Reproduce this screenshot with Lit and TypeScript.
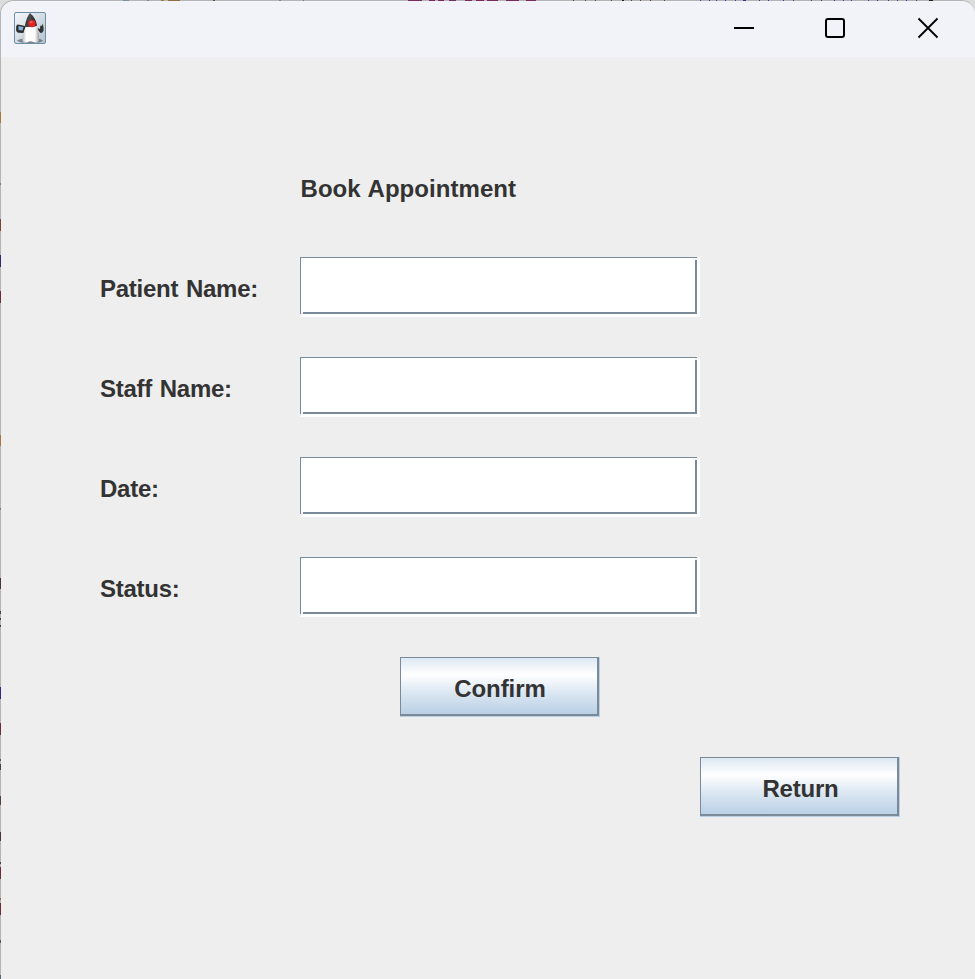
import { LitElement, html, css, svg } from "lit";
import { customElement } from "lit/decorators.js";

type Speck = [start: number, length: number, colour: string];

// Slivers of the editor that lies behind the window, along its top edge.
const navy = [700, 709, 716, 725, 735, 759, 768, 783, 793, 811, 821, 834, 843, 851, 868, 877, 888, 897, 906, 916];
const amber = [573, 585, 595, 611, 631, 640, 650, 664];
const topSpecks: Speck[] = [
  [123, 6, "#78909c"], [147, 2, "#7c8790"], [161, 3, "#a07a45"], [168, 12, "#8f6d3d"],
  [213, 2, "#555"], [279, 2, "#777d9a"], [303, 1, "#777"],
  [408, 14, "#7a2a60"], [429, 6, "#7a2a60"], [438, 6, "#7a2a60"], [449, 7, "#7a2a60"],
  [465, 7, "#7a2a60"], [476, 8, "#7a2a60"], [487, 11, "#7a2a60"], [506, 13, "#7a2a60"],
  [526, 10, "#7a2a60"], [622, 2, "#222"], [743, 3, "#3c2f9c"], [929, 4, "#222"],
  ...amber.map((x): Speck => [x, 1, "#5a4636"]),
  ...navy.map((x): Speck => [x, 1, "#3f38a8"]),
];

// The same along the left edge.
const leftSpecks: Speck[] = [
  [112, 11, "#a87838"], [183, 2, "#8a7a6a"], [219, 12, "#774634"], [255, 12, "#302a70"],
  [291, 12, "#702a36"], [435, 11, "#a87838"], [508, 2, "#8a7a6a"], [578, 11, "#4a3434"],
  [611, 3, "#444"], [618, 2, "#444"], [625, 2, "#444"], [687, 12, "#302a80"],
  [723, 12, "#702a36"], [759, 2, "#555"], [764, 6, "#444"], [796, 9, "#55403a"],
  [832, 9, "#4a3434"], [862, 2, "#444"], [867, 12, "#702a36"], [898, 2, "#8a6a4a"],
  [903, 12, "#702a36"], [940, 3, "#555"], [975, 4, "#567"],
];

const duke = svg`
  <defs>
    <linearGradient id="tile" x1="0" y1="0" x2="1" y2="1">
      <stop offset="0" stop-color="#f4f7fa"/><stop offset="1" stop-color="#b3c2d0"/>
    </linearGradient>
    <linearGradient id="belly" x1="0" y1="0" x2="1" y2="0">
      <stop offset="0" stop-color="#bdbdbd"/><stop offset=".25" stop-color="#fff"/><stop offset=".75" stop-color="#fafafa"/><stop offset="1" stop-color="#9c9c9c"/>
    </linearGradient>
    <linearGradient id="head" x1="0" y1="0" x2="1" y2="0">
      <stop offset="0" stop-color="#333"/><stop offset=".4" stop-color="#4c4c4c"/><stop offset="1" stop-color="#1b1b1b"/>
    </linearGradient>
  </defs>
  <rect x=".5" y=".5" width="31" height="31" rx="1.500" fill="url(#tile)" stroke="#6d8ea6"/>
  <path d="M3 28.500Q6 26 16 26.500Q27 26 29 28.500Q28 31 16 31Q4 31 3 28.500Z" fill="#4f5a64" opacity=".65"/>
  <path d="M12.500 14.500Q8 13 3.500 12.500Q1.500 13.500 2.200 16Q1.500 20 4.500 20.800L9.500 21L12 19Z" fill="#2c2c2c"/>
  <path d="M4.500 14L9.500 15L8.500 18.500L4.500 18Z" fill="#86b1d8"/>
  <path d="M23.500 16Q25 21 27.500 21Q30 20 29.500 15.500L28.800 11.500L27.800 14L26.300 13.500L26 17Z" fill="#333"/>
  <path d="M12.500 12.500Q9.500 19 8.500 25Q7.500 29 10 30.300Q12.500 31 15 29.500Q17 29 19.500 30Q23 31.200 24.500 29.500Q26 26 24.500 21Q23.500 16 22 12Z" fill="url(#belly)"/>
  <path d="M16 1Q12.300 5 10.800 14.500Q14 15.500 17 14.800Q21 15 23 13.500Q21.800 6 16 1Z" fill="url(#head)"/>
  <circle cx="18" cy="11.600" r="3.700" fill="#e32424"/>
  <ellipse cx="17.200" cy="10.200" rx="1.600" ry="1" fill="#f2766c" opacity=".7"/>
`;

@customElement("app-root")
export class AppRoot extends LitElement {
  static styles = css`
    :host { display: block; position: relative; width: 975px; height: 979px; overflow: hidden;
      font: bold 24px/28px "Liberation Sans", Arial, sans-serif; color: #333; }
    * { box-sizing: border-box; }
    .backdrop { height: 979px; background: #dcdcdc; }
    .window { height: 979px; border: 1px solid #b4b4b6; border-right-width: 0; border-bottom: 0;
      border-radius: 14px 14px 0 0; overflow: hidden; background: #eee; }
    .specks { position: absolute; inset: 0; width: 975px; height: 979px; pointer-events: none; }
    .titlebar { height: 56px; background: #f1f3f9; display: flex; align-items: center; padding: 0 36px 0 13px; }
    .duke { width: 32px; height: 32px; margin-top: -2px; }
    .controls { margin-left: auto; display: flex; gap: 70px; margin-top: -2px; }
    .controls svg { width: 22px; height: 22px; display: block; }
    .form { padding: 118px 0 0 99px; }
    .heading { margin-left: 200.5px; height: 82px; letter-spacing: 0.05px; word-spacing: 1px; }
    .row { display: grid; grid-template-columns: 200px 400px; height: 100px; letter-spacing: -0.25px; word-spacing: 1.2px; }
    .row span { padding-top: 18px; }
    .field { width: 400px; height: 60px; background: #fff; padding: 0 3px 3px 0; position: relative; }
    .inner { width: 397px; height: 57px; border: 1px solid #7a8a99; border-width: 1px 2px 2px 1px; }
    .field::before, .field::after { content: ""; position: absolute; }
    .field::before { left: 0; top: 57px; width: 3px; height: 3px;
      background: linear-gradient(135deg, #eee 50%, #fff 50%); }
    .field::after { left: 395px; top: 1px; width: 2px; height: 2px; background: #f1f1f1; }
    .nick { position: absolute; left: 1px; top: 55px; width: 2px; height: 2px; background: #f1f1f1; }
    .corner { position: absolute; left: 397px; top: 0; width: 3px; height: 3px;
      background: linear-gradient(135deg, #eee 50%, #fff 50%); }
    .btn { width: 200px; height: 60px; border: 0; padding: 0 1px 1px 0; background: #b8cfe5;
      font: inherit; color: inherit; display: block; }
    .face { width: 199px; height: 59px; border: 1px solid #7a8a99; border-width: 1px 2px 2px 1px;
      padding: 17px 0 0 2px; text-align: center; letter-spacing: -0.08px;
      background: linear-gradient(#dde8f3 0%, #fff 30%, #dde8f3 60%, #bad0e5 100%); }
    .confirm { margin-left: 300px; }
    .return { margin: 40px 0 0 600px; }
    .return .face { padding-left: 3px; letter-spacing: -0.2px; }
  `;

  render() {
    return html`<div class="backdrop"><div class="window">
      <div class="titlebar">
        <svg class="duke" viewBox="0 0 32 32">${duke}</svg>
        <div class="controls">
          <svg viewBox="0 0 22 22"><path d="M1 11H21" stroke="#000" stroke-width="2"/></svg>
          <svg viewBox="0 0 22 22"><rect x="1" y="2" width="18" height="18" rx="2" fill="none" stroke="#000" stroke-width="2"/></svg>
          <svg viewBox="0 0 22 22"><path d="M1.500 1.500L20.500 20.500M20.500 1.500L1.500 20.500" stroke="#000" stroke-width="1.800"/></svg>
        </div>
      </div>
      <div class="form">
        <div class="heading">Book Appointment</div>
        ${["Patient Name:", "Staff Name:", "Date:", "Status:"].map(
          (t) => html`<label class="row"><span>${t}</span><div class="field"><div class="inner"></div><i class="nick"></i><i class="corner"></i></div></label>`
        )}
        <button class="btn confirm"><div class="face">Confirm</div></button>
        <button class="btn return"><div class="face">Return</div></button>
      </div>
    </div></div>
    <svg class="specks" viewBox="0 0 975 979">
      ${topSpecks.map(([x, w, c]) => svg`<rect x=${x} y="0" width=${w} height="1" fill=${c}/>`)}
      ${leftSpecks.map(([y, h, c]) => svg`<rect x="0" y=${y} width="1" height=${h} fill=${c}/>`)}
    </svg>`;
  }
}
